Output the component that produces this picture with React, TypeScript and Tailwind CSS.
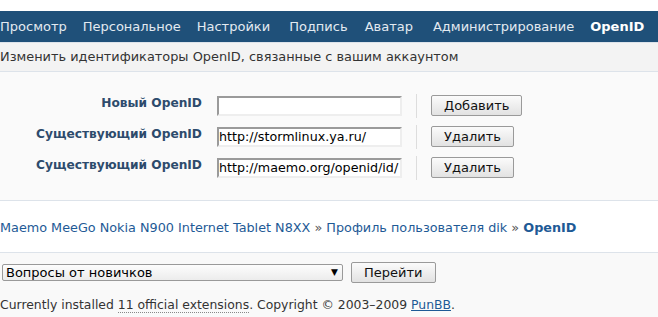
const NAV = [
  { label: "Просмотр", cls: "" },
  { label: "Персональное", cls: "ml-[16px]" },
  { label: "Настройки", cls: "ml-[16px]" },
  { label: "Подпись", cls: "ml-[19px]" },
  { label: "Аватар", cls: "ml-[17px]" },
  { label: "Администрирование", cls: "ml-[20px]" },
];

const ROWS = [
  { label: "Новый OpenID", value: "", action: "Добавить" },
  { label: "Существующий OpenID", value: "http://stormlinux.ya.ru/", action: "Удалить" },
  { label: "Существующий OpenID", value: "http://maemo.org/openid/id/", action: "Удалить" },
];

function Btn({ children }: { children: React.ReactNode }) {
  return (
    <button
      type="button"
      className="h-[21px] rounded-[2px] border border-[#9a9a9a] bg-gradient-to-b from-[#fbfbfb] to-[#e2e2e2] px-[12px] text-[13px] leading-none text-[#111]"
    >
      {children}
    </button>
  );
}

export default function App() {
  return (
    <div className="min-h-[317px] bg-white pt-[11px] font-['DejaVu_Sans',sans-serif] text-[13px] text-[#333]">
      <nav className="flex h-[31px] items-center bg-[#1f5079] text-[#e3eaf1]">
        {NAV.map((n) => (
          <span key={n.label} className={n.cls}>
            {n.label}
          </span>
        ))}
        <span className="ml-[16px] font-bold text-white">OpenID</span>
      </nav>

      <div className="flex h-[30px] items-center border-t border-b border-[#dde3ea] bg-[#f3f3f3] text-[12.9px] text-[#333]">
        Изменить идентификаторы OpenID, связанные с вашим аккаунтом
      </div>

      <div className="bg-[#fafafa] pt-[18px] pb-[17px]">
        {ROWS.map((r, i) => (
          <div key={i} className="flex h-[31px] items-center">
            <label className="w-[202px] pb-[5px] text-right text-[12.2px] font-bold text-[#2d4b6c]">{r.label}</label>
            <input
              readOnly
              value={r.value}
              className="ml-[15px] h-[20px] w-[185px] border-2 border-t-[#9a9a9a] border-l-[#9a9a9a] border-r-[#eeeeee] border-b-[#eeeeee] bg-white px-0 text-[12.7px] text-black outline-none"
            />
            <div className="mx-[14px] h-[24px] w-px bg-[#dddddd]" />
            <Btn>{r.action}</Btn>
          </div>
        ))}
      </div>

      <div className="border-t border-b border-[#dde3ea] bg-white pt-[19px] pb-[16px] text-[12.8px] leading-[16px] text-[#1e5a96]">
        Maemo MeeGo Nokia N900 Internet Tablet N8XX <span className="text-[#555]">»</span> Профиль
        пользователя dik <span className="text-[#555]">»</span> <span className="font-bold">OpenID</span>
      </div>

      <div className="bg-[#f9f9f9] pt-[9px] pb-[8px]">
        <div className="flex items-center">
          <div className="ml-[2px] flex h-[17px] w-[341px] items-center justify-between rounded-[2px] border border-[#9a9a9a] bg-gradient-to-b from-[#fdfdfd] to-[#ececec] pl-[3px] pr-[4px] text-[13px] text-black">
            <span>Вопросы от новичков</span>
            <span className="text-[9px]">▼</span>
          </div>
          <div className="ml-[8px]">
            <Btn>Перейти</Btn>
          </div>
        </div>
        <div className="mt-[13px] text-[12.4px] text-[#333]">
          Currently installed{" "}
          <span className="border-b border-dotted border-[#888]">11 official extensions</span>. Copyright © 2003–2009{" "}
          <span className="text-[#1e5a96] underline">PunBB</span>.
        </div>
      </div>
    </div>
  );
}
